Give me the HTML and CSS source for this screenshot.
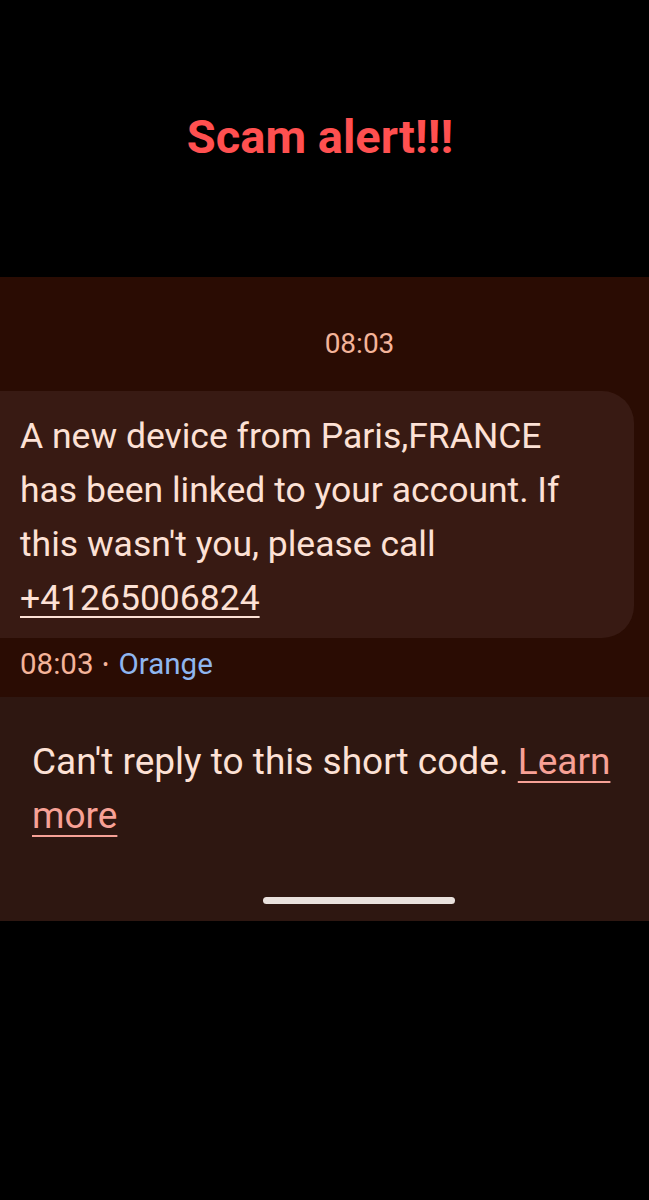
FILE: index.html
```html
<!DOCTYPE html>
<html lang="en">

<head>
    <meta charset="utf-8">
    <meta name="viewport" content="width=device-width, initial-scale=1">
    <title>Scam alert</title>
    <link rel="stylesheet" href="styles.css">
</head>

<body>
    <header class="banner">
        <h1>Scam alert!!!</h1>
    </header>

    <main class="thread">
        <div class="stamp">08:03</div>
        <div class="bubble">
            A new device from Paris,FRANCE has been linked to your account. If this wasn't you, please call <a class="phone" href="#">+41265006824</a>
        </div>
        <div class="meta">08:03<span class="dot">•</span><span class="sim">Orange</span></div>
    </main>

    <footer class="notice">
        <p>Can't reply to this short code. <a href="#">Learn more</a></p>
        <div class="home-bar"></div>
    </footer>
</body>

</html>
```

FILE: styles.css
```css
body {
    -webkit-font-smoothing: antialiased;
    font-family: Roboto, "Liberation Sans", Arial, sans-serif;
    margin: 0;
    background: #000;
    min-height: 1200px;
}

.banner {
    height: 277px;
    text-align: center;
}

.banner h1 {
    margin: 0;
    padding-top: 108px;
    padding-right: 9px;
    font-size: 47px;
    font-weight: 700;
    line-height: 58px;
    color: #ff5050;
}

.thread {
    background: #2a0c03;
    height: 420px;
    box-sizing: border-box;
    padding-top: 52px;
}

.stamp {
    text-align: center;
    padding-left: 70px;
    font-size: 28px;
    line-height: 30px;
    color: #f4b49a;
}

.bubble {
    margin: 32px 15px 0 -30px;
    padding: 18px 40px 13px 50px;
    background: #381a13;
    border-radius: 32px;
    font-size: 35.5px;
    line-height: 54px;
    color: #fde1d5;
}

.phone {
    color: inherit;
    text-decoration-thickness: 2px;
    text-underline-offset: 6px;
}

.meta {
    padding: 11px 20px 0;
    font-size: 29.5px;
    line-height: 30px;
    color: #f4b49a;
}

.meta .dot {
    font-size: 18px;
    vertical-align: 3px;
    margin: 0 10px 0 9px;
}

.sim {
    color: #8fb6f0;
}

.notice {
    background: #2e1711;
    height: 224px;
    box-sizing: border-box;
    padding: 38px 30px 0 32px;
}

.notice p {
    margin: 0;
    font-size: 37px;
    line-height: 54px;
    color: #fde1d5;
}

.notice a {
    color: #f7a196;
    text-decoration-thickness: 2px;
    text-underline-offset: 7px;
}

.home-bar {
    width: 192px;
    height: 7px;
    margin: 54px 0 0 231px;
    border-radius: 4px;
    background: #e9e1dd;
}
```
